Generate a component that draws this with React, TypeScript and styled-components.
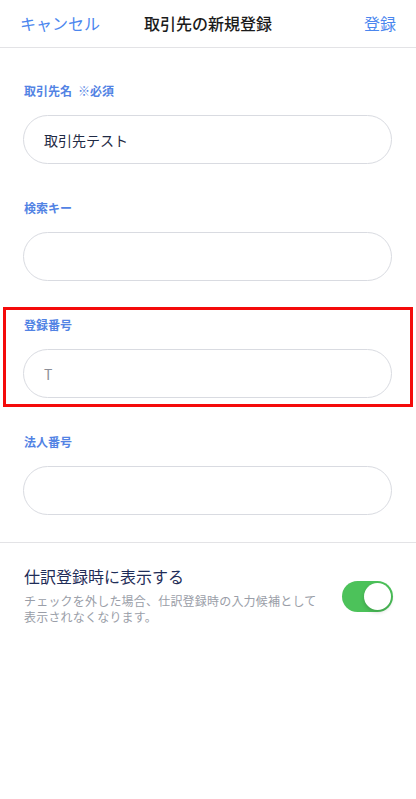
import React from "react";
import styled, { createGlobalStyle } from "styled-components";

const Global = createGlobalStyle`
  html, body { margin: 0; padding: 0; background: #fff; }
  body { font-family: "Noto Sans CJK JP", "Noto Sans", sans-serif; -webkit-font-smoothing: antialiased; }
  * { box-sizing: border-box; }
`;

const Page = styled.div`
  width: 416px;
  min-height: 799px;
  background: #fff;
  display: flex;
  flex-direction: column;
`;

const Header = styled.header`
  height: 48px;
  border-bottom: 1px solid #e3e3e6;
  display: grid;
  grid-template-columns: 1fr auto 1fr;
  align-items: center;
  padding: 0 20px 2px 20px;
`;

const HeaderButton = styled.button<{ $align: "left" | "right" }>`
  border: none;
  background: none;
  padding: 0;
  font-family: inherit;
  font-size: 16px;
  color: #4b86ee;
  justify-self: ${(p) => (p.$align === "left" ? "start" : "end")};
  cursor: pointer;
`;

const Title = styled.h1`
  margin: 0;
  font-size: 16px;
  font-weight: 500;
  color: #1b1b1b;
`;

const Form = styled.div`
  display: flex;
  flex-direction: column;
  padding: 35px 0 27px;
  gap: 36px;
`;

const Field = styled.div`
  position: relative;
  display: flex;
  flex-direction: column;
  gap: 16px;
  padding: 0 24px 0 23px;
`;

const Highlight = styled.div`
  position: absolute;
  left: 3px;
  right: 3px;
  top: -10px;
  bottom: -9px;
  border: 3px solid #f40b0b;
  pointer-events: none;
`;

const Label = styled.label`
  font-size: 12px;
  line-height: 16px;
  font-weight: 700;
  color: #5283e4;
  padding-left: 1px;
`;

const Required = styled.span`
  margin-left: 6px;
`;

const Input = styled.div<{ $placeholder?: boolean }>`
  height: 49px;
  border: 1px solid #d9dbe1;
  border-radius: 25px;
  display: flex;
  align-items: center;
  padding: 0 20px;
  font-size: 14px;
  color: ${(p) => (p.$placeholder ? "#8c8f98" : "#1f2a44")};
`;

const Divider = styled.div`
  height: 1px;
  background: #e3e3e6;
`;

const ToggleRow = styled.div`
  display: flex;
  align-items: flex-start;
  justify-content: space-between;
  padding: 22px 23px 0 24px;
`;

const ToggleText = styled.div`
  display: flex;
  flex-direction: column;
  gap: 6px;
  max-width: 298px;
`;

const ToggleTitle = styled.div`
  font-size: 16px;
  line-height: 22px;
  color: #1f2d58;
`;

const ToggleDesc = styled.div`
  font-size: 12px;
  line-height: 16px;
  color: #9a9ea8;
  letter-spacing: 0.2px;
`;

const Switch = styled.div<{ $on: boolean }>`
  position: relative;
  width: 51px;
  height: 31px;
  border-radius: 16px;
  background: ${(p) => (p.$on ? "#4cc25a" : "#e5e5ea")};
  flex-shrink: 0;
  margin-top: 16px;
`;

const Knob = styled.div<{ $on: boolean }>`
  position: absolute;
  top: 2px;
  left: ${(p) => (p.$on ? "22px" : "2px")};
  width: 27px;
  height: 27px;
  border-radius: 50%;
  background: #fff;
  box-shadow: 0 2px 4px rgba(0, 0, 0, 0.18);
`;

export default function App() {
  return (
    <Page>
      <Global />
      <Header>
        <HeaderButton $align="left">キャンセル</HeaderButton>
        <Title>取引先の新規登録</Title>
        <HeaderButton $align="right">登録</HeaderButton>
      </Header>
      <Form>
        <Field>
          <Label>
            取引先名<Required>※必須</Required>
          </Label>
          <Input>取引先テスト</Input>
        </Field>
        <Field>
          <Label>検索キー</Label>
          <Input />
        </Field>
        <Field>
          <Highlight />
          <Label>登録番号</Label>
          <Input $placeholder>T</Input>
        </Field>
        <Field>
          <Label>法人番号</Label>
          <Input />
        </Field>
      </Form>
      <Divider />
      <ToggleRow>
        <ToggleText>
          <ToggleTitle>仕訳登録時に表示する</ToggleTitle>
          <ToggleDesc>
            チェックを外した場合、仕訳登録時の入力候補として表示されなくなります。
          </ToggleDesc>
        </ToggleText>
        <Switch $on>
          <Knob $on />
        </Switch>
      </ToggleRow>
    </Page>
  );
}
